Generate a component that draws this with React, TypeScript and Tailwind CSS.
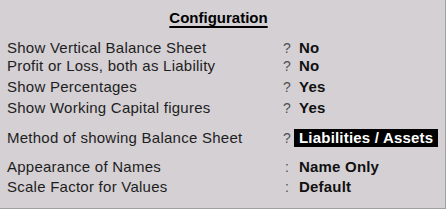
import React from 'react'

type Row = {
  label: string
  mark: '?' | ':'
  value: string
  active?: boolean
  gap: string
}

const rows: Row[] = [
  { label: 'Show Vertical Balance Sheet', mark: '?', value: 'No', gap: 'mt-[12px]' },
  { label: 'Profit or Loss, both as Liability', mark: '?', value: 'No', gap: 'mt-0' },
  { label: 'Show Percentages', mark: '?', value: 'Yes', gap: 'mt-[3px]' },
  { label: 'Show Working Capital figures', mark: '?', value: 'Yes', gap: 'mt-[3px]' },
  { label: 'Method of showing Balance Sheet', mark: '?', value: 'Liabilities / Assets', active: true, gap: 'mt-[12px]' },
  { label: 'Appearance of Names', mark: ':', value: 'Name Only', gap: 'mt-[11px]' },
  { label: 'Scale Factor for Values', mark: ':', value: 'Default', gap: 'mt-[2px]' },
]

const ConfigRow: React.FC<{ row: Row }> = ({ row }) => (
  <div className={`flex items-center h-[18px] ${row.gap}`}>
    <span className="w-[275px] shrink-0 text-[#1e1e1e] tracking-[0.25px]">{row.label}</span>
    <span
      className={`w-[12px] shrink-0 text-[14px] text-[#505050] ${
        row.mark === ':' ? 'pl-[3px]' : 'pl-[1px]'
      }`}
    >
      {row.mark}
    </span>
    <span
      className={`font-bold pl-[5px] h-[18px] tracking-[0.2px] ${
        row.active ? 'bg-black text-white pr-[5px]' : 'text-[#111]'
      }`}
    >
      {row.value}
    </span>
  </div>
)

export default function App() {
  return (
    <div
      className="w-[446px] h-[209px] bg-[#d4d0d4] border-r border-b border-[#a0a0a0] text-[15px] leading-[18px] overflow-hidden"
      style={{ fontFamily: '"Liberation Sans", Arial, sans-serif' }}
    >
      <div className="pt-[9px] flex justify-center pr-[8px]">
        <h1 className="font-bold text-black underline decoration-2 underline-offset-[3px]">
          Configuration
        </h1>
      </div>
      <div className="flex flex-col pl-[7px]">
        {rows.map((row) => (
          <ConfigRow key={row.label} row={row} />
        ))}
      </div>
    </div>
  )
}
